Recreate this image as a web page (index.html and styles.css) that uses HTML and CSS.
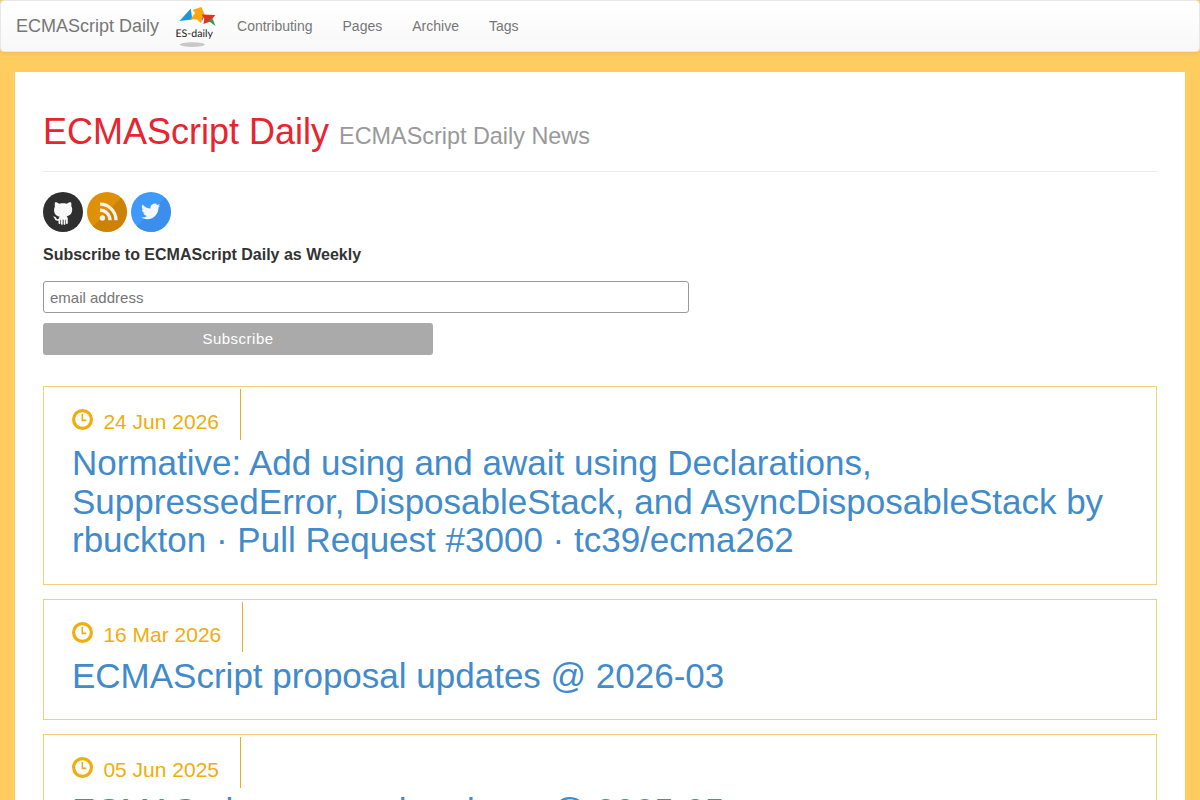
FILE: index.html
```
<!DOCTYPE html>
<html lang="en">
<head>
    <meta charset="UTF-8">
    <meta name="viewport" content="width=device-width, initial-scale=1.0">
    <title>ECMAScript Daily</title>
    <link rel="stylesheet" href="styles.css">
</head>
<body>
    <svg width="0" height="0" class="sprite">
        <symbol id="clock" viewBox="0 0 21 21">
            <circle cx="10.5" cy="10.5" r="8.9" fill="none" stroke="currentColor" stroke-width="3.2"/>
            <path d="M10.3 5v6.4h4" fill="none" stroke="currentColor" stroke-width="1.6"/>
        </symbol>
    </svg>

    <nav class="navbar">
        <a class="navbar-brand" href="#">ECMAScript Daily</a>
        <svg class="logo" width="44" height="44" viewBox="0 0 44 44">
            <path d="M4.500 17L15.800 4.500l1.500 11z" fill="#1e96dc"/>
            <path d="M26 10l3 1.500-1.500 5.500z" fill="#2b6cb8"/>
            <path d="M15.500 15l9-11.500 4 7.500-2.500 8-4-3.500z" fill="#fca311"/>
            <path d="M17.500 6l9-3 3.300 8-6 2z" fill="#fba80f"/>
            <path d="M26.500 10.500l13.800.5-5 6.500-6.800 2.500.8-5z" fill="#df3520"/>
            <path d="M33.500 17l4-2.500 3 7.500z" fill="#2aa348"/>
            <text class="logo-text" x=".5" y="32.800" textLength="37.500" lengthAdjust="spacingAndGlyphs">ES-daily</text>
            <ellipse cx="17.300" cy="40.600" rx="12.500" ry="2.300" fill="#c8c8c8"/>
        </svg>
        <ul class="navbar-nav">
            <li><a href="#">Contributing</a></li>
            <li><a href="#">Pages</a></li>
            <li><a href="#">Archive</a></li>
            <li><a href="#">Tags</a></li>
        </ul>
    </nav>

    <div class="container">
        <div class="page-header">
            <h1>ECMAScript Daily <small>ECMAScript Daily News</small></h1>
        </div>

        <div class="social">
            <a href="#" aria-label="GitHub">
                <svg width="40" height="40" viewBox="0 0 40 40">
                    <circle cx="20" cy="20" r="20" fill="#2f2f2f"/>
                    <path d="M12 10.300c1.500-.2 3 .5 4.300 1.500 2.400-.6 5-.6 7.400 0 1.300-1 2.800-1.700 4.300-1.500.6 1.500.5 2.800.2 3.800 1.300 1.900 1.300 4.500.4 6.700-.8 2-2.600 3-5 3.400.9.800 1.200 1.600 1.200 2.800v4.500l-1.100.7-.7-1v-3.300l-.6-.2v4.500l-1.200.8-.6-.8v-4.500h-.9v4.500l-.6.8-1.200-.8v-4.500l-.6.2v3.300l-.7 1-1.100-.7v-2.800c-2.200.3-3.300-.5-3.900-2.200-.3-.9-.8-1.300-1.500-1.800 2-.5 2.600.6 3.200 1.600.5.8 1.200 1 2.300.7.1-1 .4-1.700 1.100-2.300-2.400-.4-4.200-1.400-5-3.400-.9-2.200-.9-4.800.3-6.700-.3-1-.4-2.500 0-4.300z" fill="#f7f7f7"/>
                </svg>
            </a>
            <a href="#" aria-label="RSS">
                <svg width="40" height="40" viewBox="0 0 40 40">
                    <circle cx="20" cy="20" r="20" fill="#e09006"/>
                    <path d="M34.140 5.860A20 20 0 0 1 5.860 34.140z" fill="#cc8207"/>
                    <circle cx="15.400" cy="26" r="2.700" fill="#f7f3ea"/>
                    <path d="M13 18.200a10 10 0 0 1 10 10M13 12.200a16 16 0 0 1 16 16" fill="none" stroke="#f7f3ea" stroke-width="3.300"/>
                </svg>
            </a>
            <a href="#" aria-label="Twitter">
                <svg width="40" height="40" viewBox="0 0 40 40">
                    <circle cx="20" cy="20" r="20" fill="#4099ff"/>
                    <path d="M34.140 5.860A20 20 0 0 1 5.860 34.140z" fill="#3b8eed"/>
                    <path transform="translate(10.200 9.900) scale(.8)" d="M23.950 4.570a10 10 0 0 1-2.820.77 4.960 4.960 0 0 0 2.160-2.720c-.95.560-2 .960-3.120 1.180a4.920 4.920 0 0 0-8.380 4.480C7.690 8.100 4.070 6.130 1.640 3.160a4.920 4.920 0 0 0 1.520 6.570 4.900 4.900 0 0 1-2.230-.61v.06a4.920 4.920 0 0 0 3.950 4.830 5 5 0 0 1-2.210.08 4.940 4.940 0 0 0 4.600 3.420A9.870 9.870 0 0 1 0 19.540a14 14 0 0 0 7.550 2.210c9.050 0 14-7.500 14-13.980 0-.21 0-.42-.02-.63a9.940 9.940 0 0 0 2.420-2.570z" fill="#f5f8fb"/>
                </svg>
            </a>
        </div>

        <form class="subscribe">
            <label for="email">Subscribe to ECMAScript Daily as Weekly</label>
            <input type="email" id="email" placeholder="email address">
            <button type="button">Subscribe</button>
        </form>

        <div class="post">
            <div class="post-date"><svg class="icon"><use href="#clock"/></svg>24 Jun 2026</div>
            <h2><a href="#">Normative: Add using and await using Declarations, SuppressedError, DisposableStack, and AsyncDisposableStack by rbuckton · Pull Request #3000 · tc39/ecma262</a></h2>
        </div>
        <div class="post">
            <div class="post-date"><svg class="icon"><use href="#clock"/></svg>16 Mar 2026</div>
            <h2><a href="#">ECMAScript proposal updates @ 2026-03</a></h2>
        </div>
        <div class="post">
            <div class="post-date"><svg class="icon"><use href="#clock"/></svg>05 Jun 2025</div>
            <h2><a href="#">ECMAScript proposal updates @ 2025-05</a></h2>
        </div>
    </div>
</body>
</html>
```
FILE: styles.css
```
* {
    box-sizing: border-box;
}
html {
    height: 100%;
    overflow: hidden;
}
body {
    margin: 0;
    height: 100%;
    overflow: hidden;
    background-color: #fecc5f;
    font-family: "Liberation Sans", Arial, sans-serif;
    font-size: 14px;
    line-height: 20px;
    color: #333;
}
a {
    color: #428bca;
    text-decoration: none;
}
.sprite {
    display: none;
}

/* navbar */
.navbar {
    display: flex;
    align-items: center;
    height: 52px;
    margin-bottom: 20px;
    padding-left: 15px;
    border: 1px solid #e7e7e7;
    border-radius: 4px;
    background-image: linear-gradient(to bottom, #fff 0%, #f8f8f8 100%);
    box-shadow: inset 0 1px 0 rgba(255, 255, 255, .15), 0 1px 5px rgba(0, 0, 0, .075);
}
.navbar a {
    color: #777;
}
.navbar-brand {
    font-size: 18px;
}
.logo {
    margin-left: 16px;
}
.logo-text {
    font-family: Lato, sans-serif;
    font-size: 10.5px;
    fill: #222;
    text-rendering: geometricPrecision;
}
.navbar-nav {
    display: flex;
    gap: 30px;
    margin: 0 0 0 18px;
    padding: 0;
    list-style: none;
}

/* content */
.container {
    width: 1170px;
    margin: 0 auto;
    padding: 40px 28px 0;
    background-color: #fff;
}
.page-header {
    height: 60px;
    margin-bottom: 20px;
    border-bottom: 1px solid #eee;
}
h1 {
    margin: 0;
    font-size: 36px;
    font-weight: 500;
    line-height: 40px;
    color: #e8242f;
}
h1 small {
    font-size: 23.4px;
    font-weight: normal;
    color: #999;
}
.social {
    display: flex;
    gap: 4px;
}
.social svg {
    display: block;
}

.subscribe {
    display: flex;
    flex-direction: column;
    margin-bottom: 31.4px;
}
.subscribe label {
    margin: 13px 0 16px;
    font-size: 16px;
    font-weight: bold;
}
.subscribe input {
    width: 646px;
    height: 32px;
    margin-bottom: 10px;
    padding: 1px 6px 0;
    border: 1px solid #999;
    border-radius: 3px;
    font-family: inherit;
    font-size: 15px;
}
.subscribe input::placeholder {
    color: #757575;
}
.subscribe button {
    width: 390px;
    height: 32px;
    padding: 0 0 2px;
    border: none;
    border-radius: 3px;
    background-color: #aaa;
    color: #fff;
    font-family: inherit;
    font-size: 15px;
    letter-spacing: .5px;
}

/* posts */
.post {
    margin-bottom: 14px;
    padding: 2px 28px 24.1px;
    border: 1px solid #f0d27a;
}
.post-date {
    display: flex;
    align-items: center;
    width: fit-content;
    height: 50.7px;
    margin-bottom: 4.1px;
    padding: 15px 21px 0 0;
    border-right: 1px solid #e8ae1c;
    color: #f0ad0c;
    font-size: 21px;
}
.post-date .icon {
    width: 21px;
    height: 21px;
    margin: -5px 10.4px 0 0;
}
.post h2 {
    margin: 0;
    font-size: 35px;
    font-weight: 500;
    line-height: 38.5px;
}
```
